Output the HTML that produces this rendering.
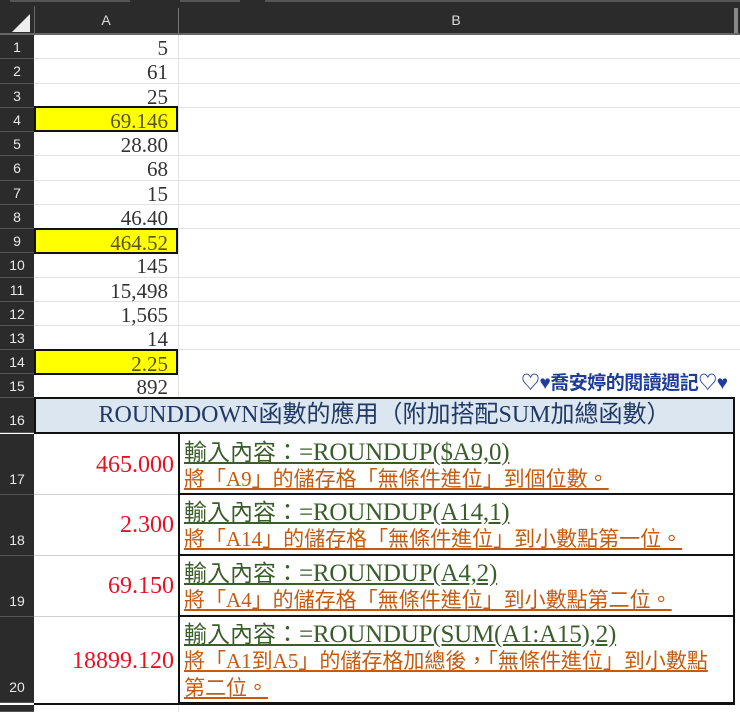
<!DOCTYPE html>
<html><head><meta charset="utf-8">
<style>
*{margin:0;padding:0;box-sizing:border-box}
html,body{width:740px;height:712px;overflow:hidden}
body{background:#fff;position:relative;font-family:"Liberation Serif","Noto Serif CJK SC",serif}
.abs{position:absolute}
.rh{position:absolute;left:0;width:34px;background:#2b2b2b;color:#e8e8e8;font-family:"Liberation Sans",sans-serif;font-size:14px;text-align:center;border-bottom:1px solid #555}
.num{position:absolute;left:34px;width:144px;text-align:right;padding-right:10px;font-size:21px;color:#333;border-bottom:1px solid #e2e2e2;line-height:27px}
.grid{position:absolute;left:178px;right:0;border-bottom:1px solid #e2e2e2}
.y{background:#ffff00;border:2px solid #111;color:#555500;line-height:26px}
.g{color:#3a5e2a;text-decoration:underline;font-size:23px;font-family:"Liberation Serif","Noto Sans CJK TC",sans-serif;white-space:nowrap}
.g span{font-size:25px;letter-spacing:-0.2px}
.o{color:#c55a11;text-decoration:underline;font-size:21px;font-family:"Liberation Serif","Noto Sans CJK TC",sans-serif;white-space:nowrap}
.red{position:absolute;left:34px;width:143px;text-align:right;padding-right:3px;color:#e81123;font-size:24px}
.cell{position:absolute;left:178px;width:557px;padding-left:4px;border-left:2px solid #111;border-right:2px solid #111;border-bottom:2px solid #111}
.gl{position:absolute;left:34px;width:144px;height:1px;background:#d0d0d0}
</style></head><body>
<div class="abs" style="left:0;top:0;width:740px;height:34px;background:#2b2b2b"></div>
<div class="abs" style="left:10px;top:0;width:120px;height:2px;background:#555"></div>
<div class="abs" style="left:180px;top:0;width:60px;height:2px;background:#555"></div>
<div class="abs" style="left:265px;top:0;width:475px;height:2px;background:#555"></div>
<div class="abs" style="left:12px;top:14px;width:0;height:0;border-left:18px solid transparent;border-bottom:18px solid #eee"></div>
<div class="abs" style="left:34px;top:6px;width:1px;height:28px;background:#666"></div>
<div class="abs" style="left:178px;top:8px;width:1px;height:26px;background:#777"></div>
<div class="abs" style="left:34px;top:12px;width:144px;text-align:center;color:#ddd;font:14px 'Liberation Sans',sans-serif">A</div>
<div class="abs" style="left:178px;top:12px;width:556px;text-align:center;color:#ddd;font:14px 'Liberation Sans',sans-serif">B</div>
<div class="abs" style="left:734px;top:8px;width:4px;height:26px;background:#888"></div>
<div class="abs" style="left:0;top:33px;width:740px;height:2px;background:#666"></div>
<div class="abs" style="left:178px;top:35px;width:1px;height:363px;background:#e2e2e2"></div>

<div class="rh" style="top:35px;height:24px;line-height:24px">1</div><div class="num" style="top:35px;height:24px">5</div><div class="grid" style="top:35px;height:24px"></div>
<div class="rh" style="top:59px;height:25px;line-height:25px">2</div><div class="num" style="top:59px;height:25px">61</div><div class="grid" style="top:59px;height:25px"></div>
<div class="rh" style="top:84px;height:24px;line-height:24px">3</div><div class="num" style="top:84px;height:24px">25</div><div class="grid" style="top:84px;height:24px"></div>
<div class="rh" style="top:108px;height:24px;line-height:24px">4</div><div class="num y" style="top:106px;height:26px;padding-right:8px">69.146</div>
<div class="rh" style="top:132px;height:24px;line-height:24px">5</div><div class="num" style="top:132px;height:24px">28.80</div><div class="grid" style="top:132px;height:24px"></div>
<div class="rh" style="top:156px;height:25px;line-height:25px">6</div><div class="num" style="top:156px;height:25px">68</div><div class="grid" style="top:156px;height:25px"></div>
<div class="rh" style="top:181px;height:24px;line-height:24px">7</div><div class="num" style="top:181px;height:24px">15</div><div class="grid" style="top:181px;height:24px"></div>
<div class="rh" style="top:205px;height:24px;line-height:24px">8</div><div class="num" style="top:205px;height:24px">46.40</div><div class="grid" style="top:205px;height:24px"></div>
<div class="rh" style="top:229px;height:24px;line-height:24px">9</div><div class="num y" style="top:228px;height:26px;padding-right:8px">464.52</div>
<div class="rh" style="top:253px;height:25px;line-height:25px">10</div><div class="num" style="top:253px;height:25px">145</div><div class="grid" style="top:253px;height:25px"></div>
<div class="rh" style="top:278px;height:24px;line-height:24px">11</div><div class="num" style="top:278px;height:24px">15,498</div><div class="grid" style="top:278px;height:24px"></div>
<div class="rh" style="top:302px;height:24px;line-height:24px">12</div><div class="num" style="top:302px;height:24px">1,565</div><div class="grid" style="top:302px;height:24px"></div>
<div class="rh" style="top:326px;height:24px;line-height:24px">13</div><div class="num" style="top:326px;height:24px">14</div><div class="grid" style="top:326px;height:24px"></div>
<div class="rh" style="top:350px;height:24px;line-height:24px">14</div><div class="num y" style="top:349px;height:26px;padding-right:8px">2.25</div>
<div class="rh" style="top:374px;height:24px;line-height:24px">15</div><div class="num" style="top:374px;height:24px">892</div>

<div class="abs" style="left:518px;top:372px;width:222px;height:25px;background:#fff;color:#1f3d99;font:bold 19px 'Liberation Sans','Noto Sans CJK TC',sans-serif;line-height:24px;padding-left:3px;white-space:nowrap;letter-spacing:-0.5px">♡♥喬安婷的閱讀週記♡♥</div>

<div class="rh" style="top:398px;height:35px;line-height:44px">16</div>
<div class="abs" style="left:34px;top:397px;width:701px;height:37px;background:#dce6f1;border:2px solid #111;color:#1f3864;font-size:24px;text-align:center;line-height:33px;white-space:nowrap;font-family:'Liberation Serif','Noto Sans CJK TC',sans-serif">ROUNDDOWN函數的應用（附加搭配SUM加總函數）</div>

<div class="rh" style="top:434px;height:61px;line-height:90px">17</div>
<div class="red" style="top:452px">465.000</div>
<div class="cell" style="top:432px;height:63px"><div class="g" style="margin-top:8px;line-height:26px">輸入內容：<span>=ROUNDUP($A9,0)</span></div><div class="o" style="line-height:26px">將「A9」的儲存格「無條件進位」到個位數。</div></div>
<div class="gl" style="top:494px"></div>

<div class="rh" style="top:495px;height:61px;line-height:90px">18</div>
<div class="red" style="top:512px">2.300</div>
<div class="cell" style="top:495px;height:61px"><div class="g" style="margin-top:5px;line-height:26px">輸入內容：<span>=ROUNDUP(A14,1)</span></div><div class="o" style="line-height:26px">將「A14」的儲存格「無條件進位」到小數點第一位。</div></div>
<div class="gl" style="top:555px"></div>

<div class="rh" style="top:556px;height:61px;line-height:90px">19</div>
<div class="red" style="top:573px">69.150</div>
<div class="cell" style="top:556px;height:61px"><div class="g" style="margin-top:5px;line-height:26px">輸入內容：<span>=ROUNDUP(A4,2)</span></div><div class="o" style="line-height:26px">將「A4」的儲存格「無條件進位」到小數點第二位。</div></div>
<div class="gl" style="top:616px"></div>

<div class="rh" style="top:617px;height:86px;line-height:140px">20</div>
<div class="red" style="top:648px">18899.120</div>
<div class="cell" style="top:617px;height:87px"><div class="g" style="margin-top:5px;line-height:26px">輸入內容：<span>=ROUNDUP(SUM(A1:A15),2)</span></div><div class="o" style="line-height:27px;white-space:nowrap">將「A1到A5」的儲存格加總後，「無條件進位」到小數點<br>第二位。</div></div>
<div class="abs" style="left:34px;top:703px;width:701px;height:2px;background:#111"></div>
<div class="rh" style="top:705px;height:7px"></div>
<div class="abs" style="left:178px;top:705px;width:1px;height:7px;background:#e2e2e2"></div>
</body></html>
